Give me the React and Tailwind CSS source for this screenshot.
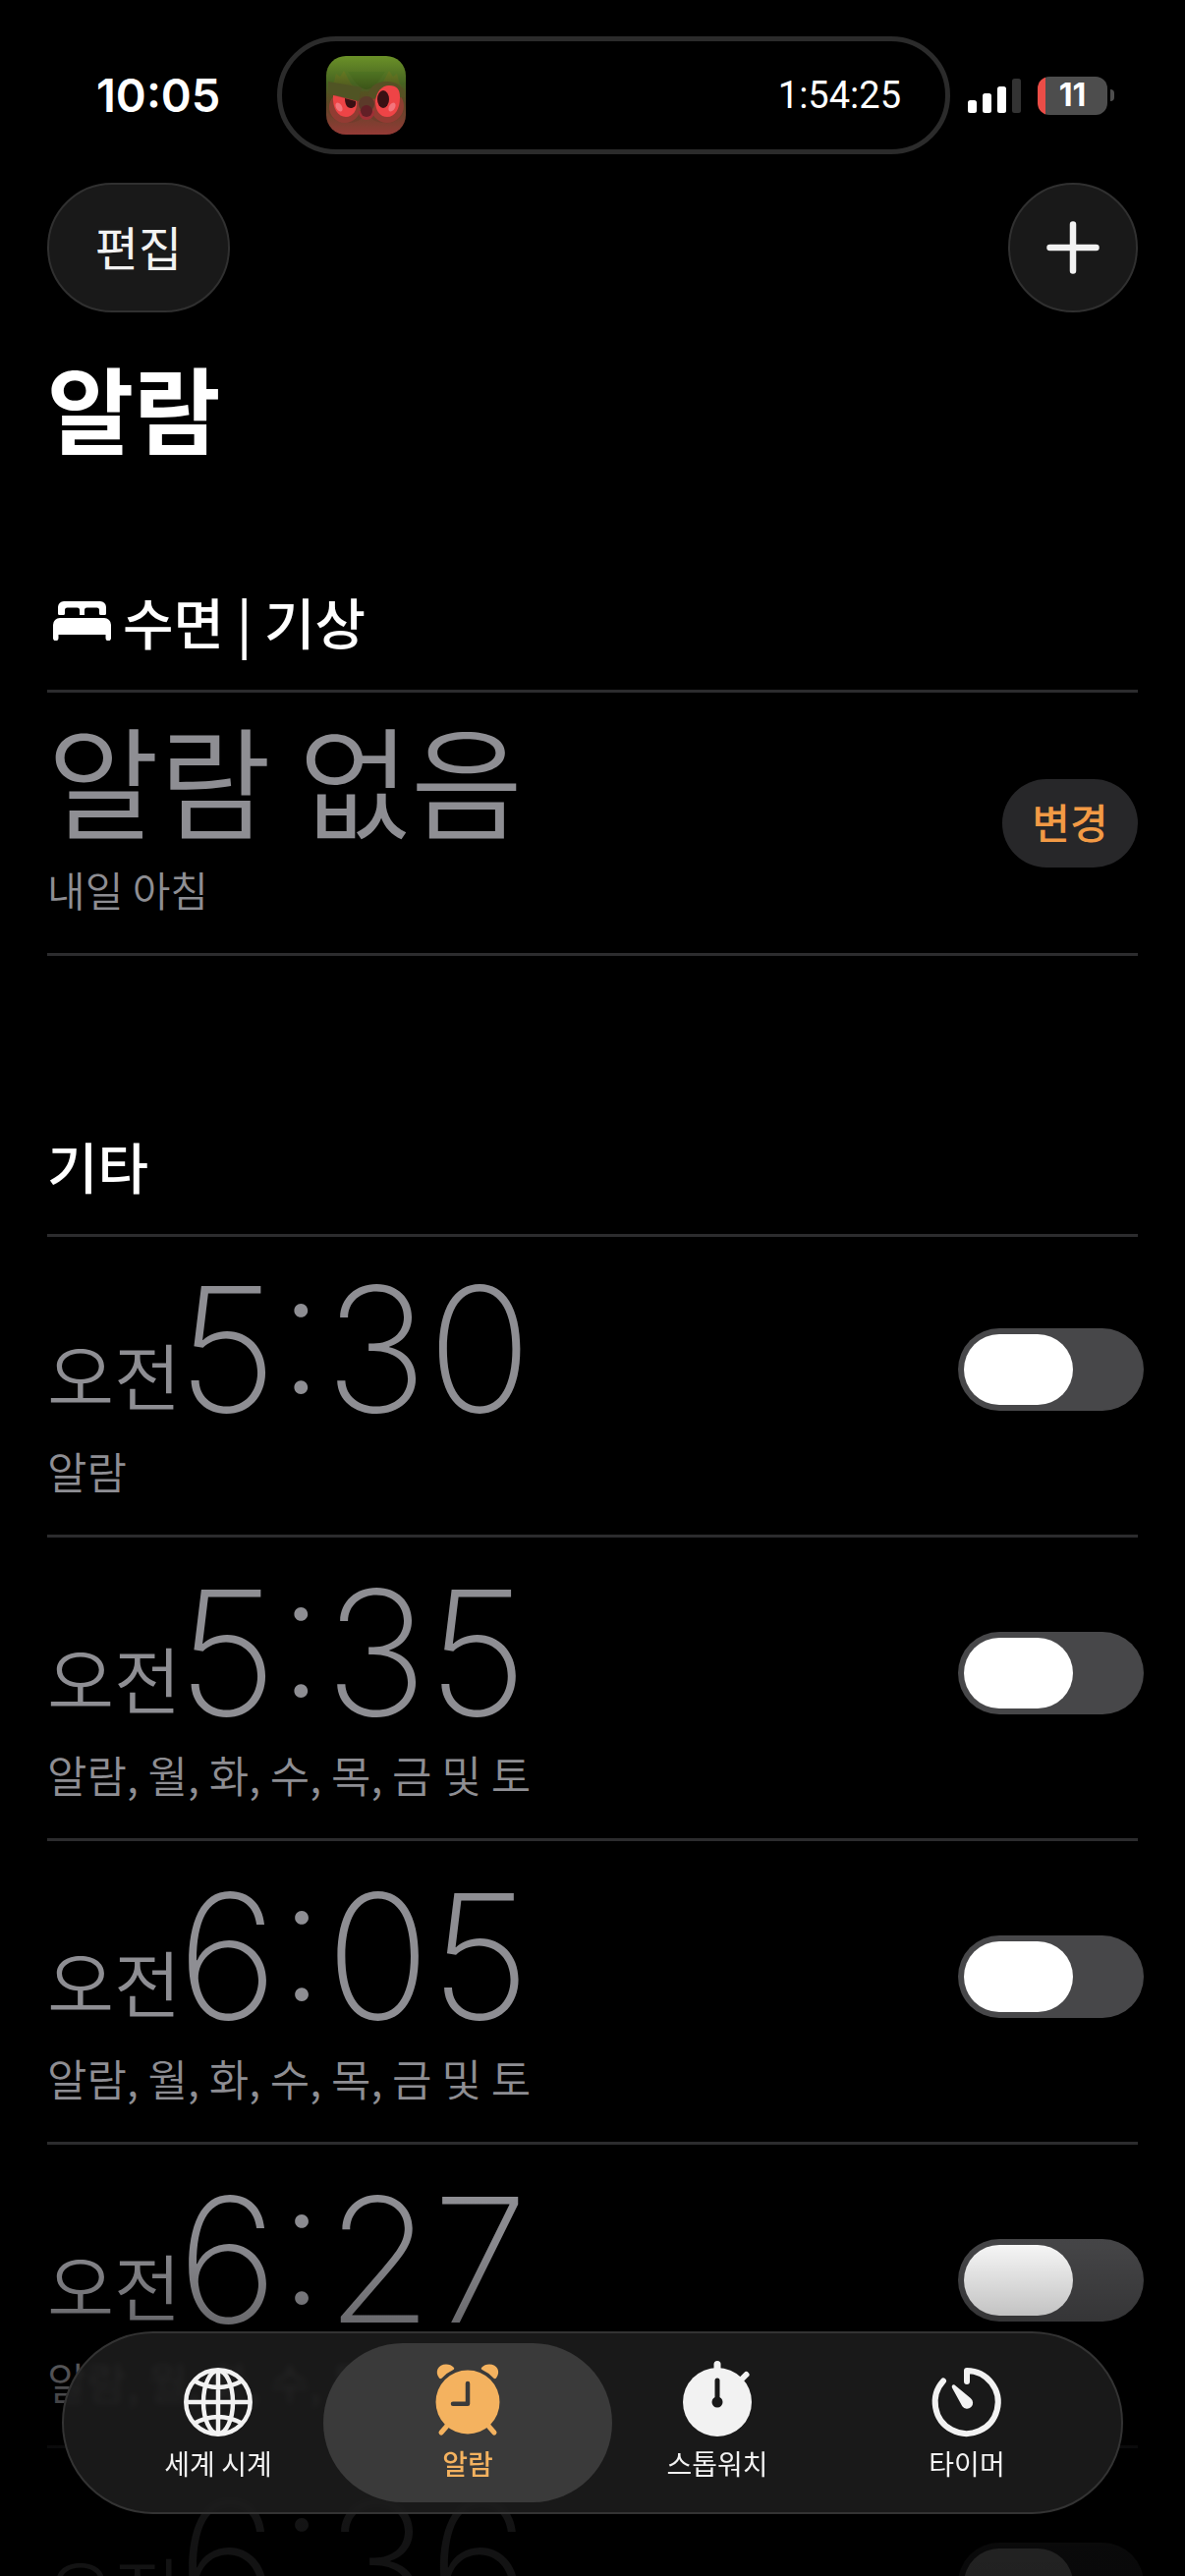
import React, { useState } from 'react';
import clsx from 'clsx';

const WEEKDAYS = '알람, 월, 화, 수, 목, 금 및 토';

const ALARMS = [
  { time: '5:30', label: '알람' },
  { time: '5:35', label: WEEKDAYS },
  { time: '6:05', label: WEEKDAYS },
  { time: '6:27', label: WEEKDAYS },
  { time: '6:36' },
];

const OwlIcon = () => (
  <svg viewBox="0 0 81 80" className="h-20 w-[81px] rounded-[20px]" aria-hidden="true">
    <defs>
      <linearGradient id="owl-bg" x1="0" y1="0" x2="0" y2="1">
        <stop offset="0" stopColor="#6b9128" />
        <stop offset="0.35" stopColor="#466321" />
        <stop offset="0.6" stopColor="#5c4627" />
        <stop offset="1" stopColor="#943a36" />
      </linearGradient>
      <linearGradient id="owl-face" x1="0" y1="0" x2="0" y2="1">
        <stop offset="0" stopColor="#6f7a1e" />
        <stop offset="0.4" stopColor="#56501f" />
        <stop offset="1" stopColor="#6b3a2b" />
      </linearGradient>
      <linearGradient id="owl-brow" x1="0" y1="0" x2="0" y2="1">
        <stop offset="0" stopColor="#4f7422" />
        <stop offset="1" stopColor="#3c5418" />
      </linearGradient>
    </defs>
    <rect width="81" height="80" fill="url(#owl-bg)" />
    <path d="M8 26l2-8 4 3 4-6 7 13 8 8h16l8-8 7-13 4 6 4-3 2 8 5 10v20c-3 9-12 13-20 12-8 0-13-4-18-9-5 5-10 9-18 9C14 68 4 64 1 56V36z" fill="url(#owl-face)" opacity="0.6" />
    <path d="M22 16c6 9 12 18 19 18s13-9 19-18z" fill="url(#owl-brow)" />
    <circle cx="19" cy="52" r="16" fill="#a33a36" opacity="0.7" />
    <circle cx="62" cy="51" r="17" fill="#a33a36" opacity="0.7" />
    <path d="M2 38l31 8 3-14L2 26z" fill="#505424" />
    <path d="M42 44c0-12 8-18 20-18 8 0 14 4 18 10v6z" fill="#565124" />
    <path d="M7 40l24 6c1 9-4 16-11 16-8 0-14-9-13-22z" fill="#ee4446" />
    <path d="M19 43l11 3c1 5-2 7-5 7-4 0-6-4-6-10z" fill="#3a1013" />
    <ellipse cx="13" cy="52" rx="3" ry="5" fill="#f4757c" transform="rotate(-30 13 52)" />
    <path d="M50 46c1-10 7-16 14-16 8 0 11 4 11 12 0 12-5 20-13 20-7 0-12-6-12-16z" fill="#ee4446" />
    <ellipse cx="58" cy="44" rx="6" ry="9" fill="#3a1013" />
    <ellipse cx="67" cy="52" rx="3" ry="5" fill="#f4757c" transform="rotate(30 67 52)" />
    <circle cx="41" cy="49" r="8" fill="#5c3a2a" />
    <path d="M33 56h16c0 6-4 9-8 9s-8-3-8-9z" fill="#a02f35" />
    <circle cx="41" cy="56" r="6" fill="#621f26" />
  </svg>
);

const BedIcon = () => (
  <svg viewBox="0 0 59 40" className="h-10 w-[59px]" fill="currentColor" aria-hidden="true">
    <path d="M5 12.500V6a6 6 0 0 1 6-6h37a6 6 0 0 1 6 6v6.500q0 1.500-1.500 1.500h-4q-1.500 0-1.500-1.500V9q0-2.500-2.500-2.500h-10Q32 6.500 32 9v5h-5V9q0-2.500-2.500-2.500h-10Q12 6.500 12 9v3.500q0 1.500-1.500 1.500h-4Q5 14 5 12.500z" />
    <path d="M0 24a7 7 0 0 1 7-7h45a7 7 0 0 1 7 7v13.500a2.500 2.500 0 0 1-5.500 0V34h-48v3.500a2.500 2.500 0 0 1-5.500 0z" />
  </svg>
);

const GlobeIcon = () => (
  <svg viewBox="0 0 80 80" className="size-20" fill="none" stroke="currentColor" strokeWidth="4.500" aria-hidden="true">
    <circle cx="40" cy="40" r="32.700" />
    <ellipse cx="40" cy="40" rx="15" ry="32" />
    <path d="M40 7v66M7 40h66M15 18q25 14 50 0M15 62q25-14 50 0" />
  </svg>
);

const AlarmIcon = () => (
  <svg viewBox="0 0 80 80" className="size-20" aria-hidden="true">
    <circle cx="40" cy="40" r="32.500" fill="currentColor" />
    <path d="M11 15.500C6 9 10 1.500 18 1.500c3 0 6 1 8 3.500.500 1 .200 1.500-1 2.300Q18 10.500 13.500 15.800q-1.500 1-2.500-.3zM69 15.500C74 9 70 1.500 62 1.500c-3 0-6 1-8 3.500-.500 1-.200 1.500 1 2.300Q62 10.500 66.500 15.800q1.500 1 2.500-.3z" fill="currentColor" />
    <path d="M20 63l-7 8M60 63l7 8" stroke="currentColor" strokeWidth="5" strokeLinecap="round" />
    <path d="M40 21v20.700H25" fill="none" stroke="#3a3a3a" strokeWidth="4.500" strokeLinecap="round" strokeLinejoin="round" />
  </svg>
);

const StopwatchIcon = () => (
  <svg viewBox="0 0 80 80" className="size-20 overflow-visible" aria-hidden="true">
    <circle cx="40" cy="40" r="35" fill="currentColor" />
    <path d="M40 1.500v8" stroke="currentColor" strokeWidth="7" strokeLinecap="round" />
    <path d="M64 17.500l5.500-5.500" stroke="currentColor" strokeWidth="6" strokeLinecap="round" />
    <path d="M40 18v22" stroke="#191919" strokeWidth="5" strokeLinecap="round" />
    <circle cx="40" cy="40" r="5.500" fill="#191919" />
  </svg>
);

const TimerIcon = () => (
  <svg viewBox="0 0 80 80" className="size-20" aria-hidden="true">
    <path d="M40 19V8a32 32 0 1 1-24 10.500" fill="none" stroke="currentColor" strokeWidth="6" strokeLinecap="round" strokeLinejoin="round" />
    <path d="M27.500 22.500L43.800 36a6 6 0 1 1-8.500 8.300L25 25.500c-1-2.200.800-4 2.500-3z" fill="currentColor" />
  </svg>
);

const TABS = [
  { name: '세계 시계', Icon: GlobeIcon },
  { name: '알람', Icon: AlarmIcon },
  { name: '스톱워치', Icon: StopwatchIcon },
  { name: '타이머', Icon: TimerIcon },
];

const StatusBar = () => (
  <div className="flex h-[120px] items-center pl-[98px] pr-[72px] font-['Inter',sans-serif]">
    <span className="w-[184px] shrink-0 text-[47px] font-semibold">10:05</span>
    <div className="flex h-full flex-1 items-center justify-between rounded-full border-5 border-[#2b2b2b] px-[45px]">
      <OwlIcon />
      <span className="font-['Roboto',sans-serif] text-[38px]">1:54:25</span>
    </div>
    <div className="ml-[18px] flex items-center gap-[17px]">
      <svg viewBox="0 0 54 35" className="h-[35px] w-[54px]" fill="currentColor" aria-hidden="true">
        <rect y="22" width="9" height="13" rx="2.500" />
        <rect x="15" y="15" width="9" height="20" rx="2.500" />
        <rect x="30" y="8" width="9" height="27" rx="2.500" />
        <rect x="45" width="9" height="35" rx="2.500" fill="#333" />
      </svg>
      <div className="flex items-center gap-[3px]">
        <div className="flex h-[39px] w-[71px] items-center justify-center rounded-xl bg-[linear-gradient(90deg,#eb4d47_8px,#4d4d4d_8px)] text-[32px] font-bold leading-none">
          11
        </div>
        <div className="h-3 w-1 rounded-r-full bg-[#4d4d4d]" />
      </div>
    </div>
  </div>
);

const AlarmRow = ({ time, label }) => {
  const [enabled, setEnabled] = useState(false);

  return (
    <li className="flex h-[309px] items-start justify-between border-b-3 border-[#2c2c2e] pt-[29px]">
      <div className="text-[#8e8e93]">
        <div className="flex items-end leading-none">
          <span className="pb-[26px] text-[74px] font-[350]">오전</span>
          <span className="-ml-1 font-['Inter',sans-serif] text-[176px] font-extralight">{time}</span>
        </div>
        {label && <p className="mt-2 text-[44px] font-[350] leading-[56px]">{label}</p>}
      </div>
      <input
        type="checkbox"
        role="switch"
        aria-label={`오전 ${time}`}
        checked={enabled}
        onChange={(e) => setEnabled(e.target.checked)}
        className="-mr-1.5 mt-[67px] h-[84px] w-[189px] shrink-0 appearance-none rounded-full bg-[#474749] p-1.5 before:block before:h-[72px] before:w-[111px] before:rounded-full before:bg-white checked:bg-[#34c759] checked:before:ml-auto"
      />
    </li>
  );
};

const TabBar = () => {
  const [active, setActive] = useState('알람');

  return (
    <nav className="absolute inset-x-[63px] bottom-[63px] grid h-[186px] grid-cols-4 rounded-full border-2 border-[#333] bg-[#1d1d1d]/85 px-[30px] backdrop-blur-[3px]">
      {TABS.map(({ name, Icon }) => (
        <button
          key={name}
          type="button"
          onClick={() => setActive(name)}
          className={clsx(
            'relative flex flex-col items-center pt-[30px]',
            name === active ? 'font-medium text-[#f4b25f]' : 'text-[#f2f2f2]'
          )}
        >
          {/* selected pill is wider than its column */}
          {name === active && (
            <span className="absolute -inset-x-5 inset-y-2.5 -z-10 rounded-full bg-[#3a3a3a]" />
          )}
          <Icon />
          <span className="mt-0.5 text-[28px] leading-10">{name}</span>
        </button>
      ))}
    </nav>
  );
};

const App = () => (
  <div className="relative h-screen overflow-hidden bg-black font-['Noto_Sans_CJK_KR',sans-serif] text-white">
    <header className="pt-[37px]">
      <StatusBar />
      <div className="mt-[29px] flex justify-between px-12">
        <button type="button" className="h-[132px] w-[186px] rounded-full border-2 border-[#303030] bg-[#191919] pb-1 text-[48px] text-[#f2f2f2]">
          편집
        </button>
        <button type="button" aria-label="추가" className="flex size-[132px] items-center justify-center rounded-full border-2 border-[#303030] bg-[#191919]">
          <svg viewBox="0 0 54 54" className="size-[54px]" stroke="#f2f2f2" strokeWidth="6.500" strokeLinecap="round" aria-hidden="true">
            <path d="M27 3.500v47M3.500 27h47" />
          </svg>
        </button>
      </div>
    </header>

    <main className="px-12">
      <h1 className="mt-12 text-[96px] font-bold leading-none">알람</h1>

      <section>
        <h2 className="flex items-center gap-3 border-b-3 border-[#2c2c2e] pb-[30px] pl-1.5 pt-[130px] text-[56px] font-medium leading-[80px]">
          <BedIcon />
          수면 | 기상
        </h2>
        <div className="flex items-center justify-between border-b-3 border-[#2c2c2e] pb-[37px] pt-6">
          <div className="font-[350] text-[#8e8e93]">
            <p className="text-[124px] leading-none">알람 없음</p>
            <p className="mt-6 text-[42px] leading-[56px]">내일 아침</p>
          </div>
          <button type="button" className="mt-[13px] h-[90px] w-[138px] rounded-full bg-[#272729] pb-1 text-[42px] font-medium text-[#f29a45]">
            변경
          </button>
        </div>
      </section>

      <section>
        <h2 className="border-b-3 border-[#2c2c2e] pb-[30px] pt-[173px] text-[56px] font-medium leading-[80px]">기타</h2>
        <ul className="-mt-[3px]">
          {ALARMS.map((alarm) => (
            <AlarmRow key={alarm.time} {...alarm} />
          ))}
        </ul>
      </section>
    </main>

    {/* fade under the tab bar */}
    <div className="pointer-events-none absolute inset-x-0 bottom-0 h-[387px] bg-[linear-gradient(180deg,#0000_0%,#0000000a_13%,#00000038_30%,#00000080_53%,#000000c4_66%,#000000db_79%,#000000de_100%)]" />
    <TabBar />
  </div>
);

export default App;
